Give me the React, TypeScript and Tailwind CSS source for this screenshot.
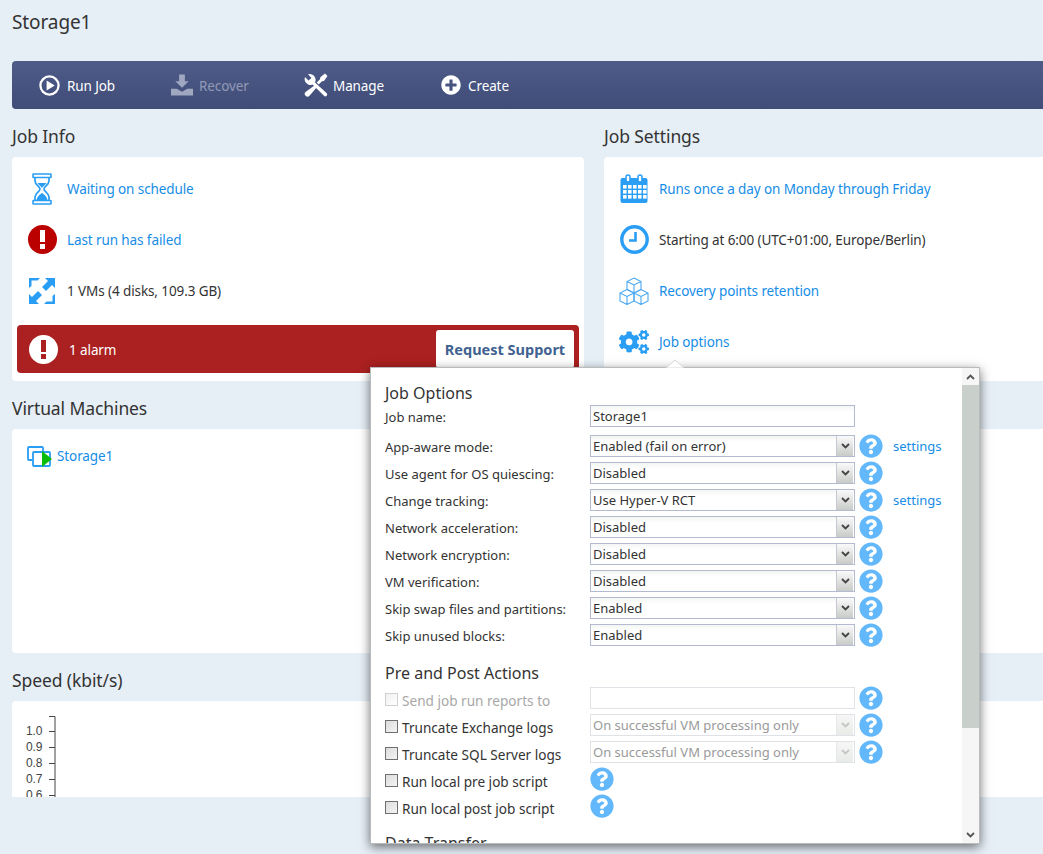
import { FaCogs, FaPlusCircle, FaQuestionCircle } from "react-icons/fa";

const Hourglass = () => (
  <svg width="20" height="32" viewBox="0 0 20 32">
    <rect x="1" y="1" width="18" height="3.500" rx="0.500" fill="#fff" stroke="#2a9df4" strokeWidth="1.600" />
    <rect x="1" y="27.500" width="18" height="3.500" rx="0.500" fill="#fff" stroke="#2a9df4" strokeWidth="1.600" />
    <path d="M3 4.500v3.500c0 4 5 5.500 5 8s-5 4-5 8v3.500M17 4.500v3.500c0 4-5 5.500-5 8s5 4 5 8v3.500" stroke="#2a9df4" strokeWidth="1.700" fill="none" />
    <path d="M5.500 10h9c-1 2-3.500 3.200-4.500 5-1-1.800-3.500-3-4.500-5zM10 20c2 1.500 5 3 5.500 7.500h-11c.5-4.500 3.500-6 5.500-7.500z" fill="#2a9df4" />
  </svg>
);

const Bang = ({ bg, fg }: { bg: string; fg: string }) => (
  <svg width="29" height="29" viewBox="0 0 29 29">
    <circle cx="14.5" cy="14.5" r="14.5" fill={bg} />
    <rect x="12" y="5" width="5" height="12" fill={fg} />
    <rect x="12" y="19" width="5" height="5" fill={fg} />
  </svg>
);

const Expand = () => (
  <svg width="28" height="28" viewBox="0 0 28 28" fill="#2a9df4">
    <path d="M1 11V1h11l-2.500 2.500H3.500V9zM27 17v10H16l2.500-2.500h6V19z" />
    <path d="M17 1h10v10l-3-3-6 6-4-4 6-6zM11 27H1V17l3 3 6-6 4 4-6 6z" />
  </svg>
);

const Calendar = () => (
  <svg width="28" height="30" viewBox="0 0 28 30">
    <rect x="0.500" y="4" width="27" height="25" rx="2" fill="#2a9df4" />
    <g fill="#fff">
      {[3, 8, 13, 18, 23].map((x) =>
        [11, 16, 21].map((y) => <rect key={x + "-" + y} x={x} y={y} width="3.600" height="3.600" />)
      )}
    </g>
    <rect x="6" y="1" width="4" height="7" rx="2" fill="#fff" stroke="#2a9df4" strokeWidth="1.500" />
    <rect x="18" y="1" width="4" height="7" rx="2" fill="#fff" stroke="#2a9df4" strokeWidth="1.500" />
  </svg>
);

const Clock = () => (
  <svg width="29" height="29" viewBox="0 0 29 29">
    <circle cx="14.500" cy="14.500" r="12.700" fill="#fff" stroke="#2a9df4" strokeWidth="3.400" />
    <path d="M15.500 7v8.500H9" fill="none" stroke="#2a9df4" strokeWidth="2.600" />
  </svg>
);

const Cubes = () => (
  <svg width="30" height="28" viewBox="0 0 30 28" fill="none" stroke="#4aa8f2" strokeWidth="1.100">
    <path d="M15 1l7 3.500v8L15 16l-7-3.500v-8zM8 4.500l7 3.500 7-3.500M15 8v8" />
    <path d="M8 12.500l7 3.500v8l-7 3.500-7-3.500v-8zM1 16l7 3.500 7-3.500M8 19.500v8" />
    <path d="M22 12.500l7 3.500v8l-7 3.500-7-3.500v-8zM15 16l7 3.500 7-3.500M22 19.500v8" />
  </svg>
);

const RunIcon = () => (
  <svg width="21" height="21" viewBox="0 0 22 22">
    <circle cx="11" cy="11" r="9.500" fill="none" stroke="#fff" strokeWidth="2.400" />
    <path d="M8 5.800v10.400L16.500 11z" fill="#fff" />
  </svg>
);

const RecoverIcon = () => (
  <svg width="22" height="22" viewBox="0 0 23 22" fill="#a0a7c0">
    <path d="M8.500 0h6v7h4l-7 7-7-7h4z" />
    <path d="M0 15h6l5.500 3 5.500-3h6v7H0z" />
  </svg>
);

const ManageIcon = () => (
  <svg width="24" height="24" viewBox="0 0 24 24" fill="#fff">
    <path d="M1 4l3.500 3.500L7.500 5 4 1.200A6 6 0 0 1 11.500 8l-.5 1.500L22.500 20a1.800 1.800 0 0 1-2.500 2.800L8.500 11.500 7 12A6 6 0 0 1 1 4z" />
    <path d="M21 .5l2.500 2.500-3.500 5-2 .3-3.300 3.200-2-2L16 6.300l.3-2z" />
    <path d="M10.800 12.200l2 2-7.300 8.500a2.300 2.300 0 0 1-4-3.700z" />
  </svg>
);

const VmIcon = () => (
  <svg width="25" height="21" viewBox="0 0 25 21">
    <path d="M5 14H2a1 1 0 0 1-1-1V2a1 1 0 0 1 1-1h13a1 1 0 0 1 1 1v3" fill="none" stroke="#2a9df4" strokeWidth="1.800" />
    <rect x="6" y="6" width="17" height="14" rx="1" fill="#fff" stroke="#2a9df4" strokeWidth="1.800" />
    <path d="M15 5v16l10-8z" fill="#0cbc0c" />
  </svg>
);

const Chevron = ({ up, color }: { up?: boolean; color: string }) => (
  <svg width="9" height="6" viewBox="0 0 9 6" className={up ? "rotate-180" : ""}>
    <path d="M1 1l3.500 3.500L8 1" fill="none" stroke={color} strokeWidth="1.800" />
  </svg>
);

const Help = () => (
  <FaQuestionCircle className="shrink-0 text-[24px] text-[#62b8fa]" />
);

function Select({ value, disabled }: { value: string; disabled?: boolean }) {
  return (
    <div
      className={`relative w-[265px] h-[22px] border shrink-0 ${
        disabled ? "border-[#dfe2e6]" : "border-[#b4bbd0] bg-gradient-to-b from-[#f3f6f3] to-white to-[30%]"
      }`}
    >
      <div className={`pl-[2px] leading-[20px] ${disabled ? "text-[#9a9a9a]" : "text-[#333]"}`}>{value}</div>
      <div
        className={`absolute right-[1px] top-0 bottom-0 w-[17px] flex items-center justify-center border-l ${
          disabled
            ? "border-[#e6e8e8] bg-gradient-to-b from-[#f6f6f6] to-[#e8ebe8]"
            : "border-[#c4c8d0] bg-gradient-to-b from-[#fafafa] to-[#c8cbc8]"
        }`}
      >
        <Chevron color={disabled ? "#c4c8c4" : "#444"} />
      </div>
    </div>
  );
}

function Row({ label, children }: { label: React.ReactNode; children: React.ReactNode }) {
  return (
    <div className="flex items-center h-[22px] mb-[5px]">
      <div className="w-[205px] shrink-0">{label}</div>
      {children}
    </div>
  );
}

function Check({ label, disabled }: { label: string; disabled?: boolean }) {
  return (
    <div className={`flex items-center gap-[4px] pt-[3px] text-[13.6px] ${disabled ? "text-[#a8a8a8]" : ""}`}>
      <span
        className={`w-[13px] h-[13px] border bg-gradient-to-br ${
          disabled ? "border-[#d0d0d0] from-[#f0f0f0] to-white" : "border-[#707070] from-[#dcdcdc] to-[#f4f4f4]"
        }`}
      />
      <span className="pt-[3px]">{label}</span>
    </div>
  );
}

const selectRows = [
  { label: "App-aware mode:", value: "Enabled (fail on error)", settings: true },
  { label: "Use agent for OS quiescing:", value: "Disabled" },
  { label: "Change tracking:", value: "Use Hyper-V RCT", settings: true },
  { label: "Network acceleration:", value: "Disabled" },
  { label: "Network encryption:", value: "Disabled" },
  { label: "VM verification:", value: "Disabled" },
  { label: "Skip swap files and partitions:", value: "Enabled" },
  { label: "Skip unused blocks:", value: "Enabled" },
];

function JobOptions() {
  return (
    <div className="absolute left-[370px] top-[367px] w-[610px] h-[477px] z-10 text-[13px] tracking-normal">
      {/* notch */}
      <svg width="18" height="9" viewBox="0 0 18 9" className="absolute left-[296px] top-[-8px]">
        <path d="M0 9l9-8 9 8z" fill="#fff" stroke="#d4d6d6" />
      </svg>
      <div className="flex w-full h-full bg-white border border-[#b8bcbc] shadow-[0_3px_10px_rgba(0,0,0,0.55)] overflow-hidden">
        <div className="flex-1 pl-[14px] pt-[13px] text-[#333]">
          <div className="text-[16px] leading-[24px] mb-0">Job Options</div>
          <div className="flex items-center h-[22px] mb-[8px]">
            <div className="w-[205px] shrink-0 pt-[4px]">Job name:</div>
            <input
              defaultValue="Storage1"
              className="w-[265px] h-[22px] border border-[#b4bbd0] px-[2px] outline-none bg-gradient-to-b from-[#f3f6f3] to-white to-[30%]"
            />
          </div>
          {selectRows.map((r) => (
            <Row key={r.label} label={<div className="pt-[4px]">{r.label}</div>}>
              <Select value={r.value} />
              <span className="ml-[4px]">
                <Help />
              </span>
              {r.settings && <a className="ml-[10px] pt-[2px] text-[#168de6]">settings</a>}
            </Row>
          ))}
          <div className="text-[16px] leading-[24px] mt-[15px] mb-[2px]">Pre and Post Actions</div>
          <Row label={<Check label="Send job run reports to" disabled />}>
            <div className="w-[265px] h-[22px] border border-[#dfe2e6]" />
            <span className="ml-[4px]">
              <Help />
            </span>
          </Row>
          <Row label={<Check label="Truncate Exchange logs" />}>
            <Select value="On successful VM processing only" disabled />
            <span className="ml-[4px]">
              <Help />
            </span>
          </Row>
          <Row label={<Check label="Truncate SQL Server logs" />}>
            <Select value="On successful VM processing only" disabled />
            <span className="ml-[4px]">
              <Help />
            </span>
          </Row>
          <Row label={<Check label="Run local pre job script" />}>
            <Help />
          </Row>
          <Row label={<Check label="Run local post job script" />}>
            <Help />
          </Row>
          <div className="text-[16px] leading-[24px] mt-[14px]">Data Transfer</div>
        </div>
        <div className="w-[17px] shrink-0 flex flex-col bg-[#f6f6f6]">
          <div className="h-[17px] flex items-center justify-center">
            <Chevron up color="#555" />
          </div>
          <div className="h-[343px] bg-[#c9cfcb]" />
          <div className="flex-1" />
          <div className="h-[17px] flex items-center justify-center">
            <Chevron color="#555" />
          </div>
        </div>
      </div>
    </div>
  );
}

const info = [
  { icon: <Hourglass />, text: "Waiting on schedule", link: true },
  { icon: <Bang bg="#bb0000" fg="#fff" />, text: "Last run has failed", link: true },
  { icon: <Expand />, text: "1 VMs (4 disks, 109.3 GB)" },
];

const settings = [
  { icon: <Calendar />, text: "Runs once a day on Monday through Friday", link: true },
  { icon: <Clock />, text: "Starting at 6:00 (UTC+01:00, Europe/Berlin)" },
  { icon: <Cubes />, text: "Recovery points retention", link: true },
  { icon: <FaCogs className="text-[30px] text-[#2a9df4]" />, text: "Job options", link: true },
];

const SpeedChart = () => (
  <svg width="60" height="96" viewBox="0 0 60 96">
    <path d="M37 15.500h6v96M37 30.500h6M37 46.500h6M37 62.500h6M37 78.500h6M37 94.500h6" fill="none" stroke="#444" />
    {["1.0", "0.9", "0.8", "0.7", "0.6"].map((t, i) => (
      <text key={t} x="14" y={34 + i * 16} fontSize="12" fill="#444" fontFamily="Liberation Sans, sans-serif">
        {t}
      </text>
    ))}
  </svg>
);

export default function App() {
  return (
    <div className="relative w-[1043px] h-[854px] overflow-hidden bg-[#e6eef6] text-[13.5px] tracking-[-0.1px] text-[#333] [font-family:'Noto_Sans',sans-serif]">
      <div className="w-[1176px] pl-[12px]">
        <h1 className="text-[19px] leading-[24px] pt-[10px] mb-[27px]">Storage1</h1>

        <div className="h-[48px] rounded-l-[4px] bg-gradient-to-b from-[#4e5b88] to-[#414c78] flex items-center pl-[27px] text-white">
          <div className="w-[132px] flex items-center gap-[7px]">
            <RunIcon />
            <span className="pt-[2px]">Run Job</span>
          </div>
          <div className="w-[133px] flex items-center gap-[6px] text-[#9299b6]">
            <RecoverIcon />
            <span className="pt-[2px]">Recover</span>
          </div>
          <div className="w-[137px] flex items-center gap-[5px]">
            <ManageIcon />
            <span className="pt-[2px]">Manage</span>
          </div>
          <div className="flex items-center gap-[7px]">
            <FaPlusCircle className="text-[20px]" />
            <span className="pt-[2px]">Create</span>
          </div>
        </div>

        <div className="grid grid-cols-[572px_572px] gap-x-[20px] mt-[15px]">
          <div>
            <h2 className="text-[17.5px] leading-[24px] mb-[9px]">Job Info</h2>
            <div className="h-[224px] bg-white rounded-[4px] px-[5px] pt-[6px]">
              {info.map((r) => (
                <div key={r.text} className="h-[51px] flex items-center">
                  <div className="w-[50px] flex justify-center">{r.icon}</div>
                  <span className={r.link ? "pt-[2px] text-[#168de6]" : "pt-[2px]"}>{r.text}</span>
                </div>
              ))}
              <div className="mt-[9px] h-[48px] rounded-[4px] bg-[#ab2020] flex items-center pr-[5px] text-white">
                <div className="w-[52px] flex justify-center">
                  <Bang bg="#fff" fg="#ab2020" />
                </div>
                <span className="pt-[2px]">1 alarm</span>
                <button className="ml-auto w-[138px] h-[38px] pt-[2px] rounded-[3px] bg-white font-bold text-[14.5px] tracking-normal text-[#3f6290]">
                  Request Support
                </button>
              </div>
            </div>
          </div>
          <div>
            <h2 className="text-[17.5px] leading-[24px] mb-[9px]">Job Settings</h2>
            <div className="h-[224px] bg-white rounded-[4px] pl-[5px] pt-[6px]">
              {settings.map((r) => (
                <div key={r.text} className="h-[51px] flex items-center">
                  <div className="w-[50px] flex justify-center">{r.icon}</div>
                  <span className={r.link ? "pt-[2px] text-[#168de6]" : "pt-[2px]"}>{r.text}</span>
                </div>
              ))}
            </div>
          </div>
        </div>

        <h2 className="text-[17.5px] leading-[24px] mt-[15px] mb-[9px]">Virtual Machines</h2>
        <div className="h-[224px] bg-white rounded-[4px] pl-[15px] pt-[17px]">
          <div className="flex items-center gap-[5px] text-[#168de6]">
            <VmIcon />
            <span>Storage1</span>
          </div>
        </div>

        <h2 className="text-[17.5px] leading-[24px] mt-[15px] mb-[9px]">Speed (kbit/s)</h2>
        <div className="h-[96px] bg-white rounded-t-[4px] overflow-hidden">
          <SpeedChart />
        </div>
      </div>

      <JobOptions />
    </div>
  );
}
